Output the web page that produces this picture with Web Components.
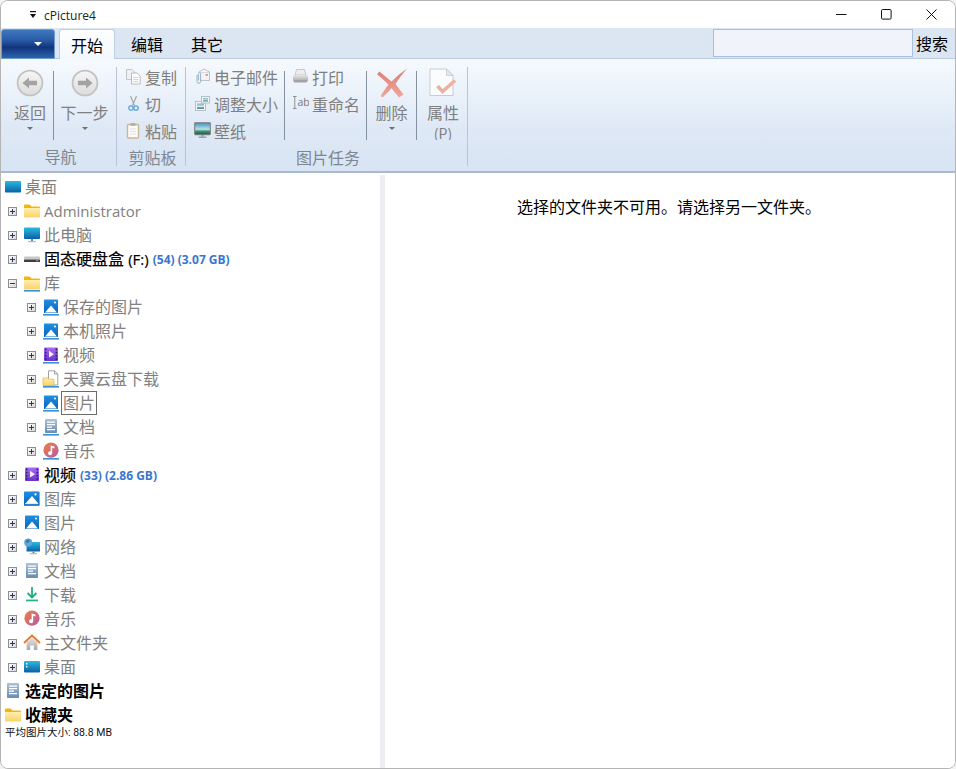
<!DOCTYPE html>
<html lang="zh"><head><meta charset="utf-8"><title>cPicture4</title>
<style>
html,body{margin:0;height:100%;background:#f3f3f3;overflow:hidden}
body{font:16px/22px "Open Sans","Noto Sans CJK SC",sans-serif;color:#000}
.lat{font-size:15px}
</style></head><body>
<x-app>
  <x-titlebar slot="title">cPicture4</x-titlebar>
  <x-tabbar slot="tabs"></x-tabbar>
  <x-ribbon slot="ribbon">
    <x-rgroup label="导航" style="width:109px;padding-left:6px;--lm:-2px">
      <x-large icon="back" arrow style="width:46px">返回</x-large>
      <x-sep></x-sep>
      <x-large icon="forward" arrow style="width:61px">下一步</x-large>
    </x-rgroup>
    <x-rgroup label="剪贴板" style="width:59px;padding-left:9px;--lm:-6px">
      <x-col>
        <x-small icon="copy">复制</x-small>
        <x-small icon="cut">切</x-small>
        <x-small icon="paste">粘贴</x-small>
      </x-col>
    </x-rgroup>
    <x-rgroup label="图片任务" style="width:272px;padding-left:9px;--lm:-6px">
      <x-col style="width:89px">
        <x-small icon="mail">电子邮件</x-small>
        <x-small icon="resize">调整大小</x-small>
        <x-small icon="wall">壁纸</x-small>
      </x-col>
      <x-sep></x-sep>
      <x-col style="width:73px;padding-left:8px">
        <x-small icon="print">打印</x-small>
        <x-small icon="rename">重命名</x-small>
      </x-col>
      <x-sep></x-sep>
      <x-large icon="delete" arrow style="width:49px">删除</x-large>
      <x-sep></x-sep>
      <x-large icon="props" style="width:50px;padding-left:2px">属性<span style="display:block;font-size:14px;line-height:16px;margin-top:2px">(P)</span></x-large>
    </x-rgroup>
  </x-ribbon>
  <x-tree slot="tree">
    <x-row level="0" icon="desk">桌面</x-row>
    <x-row level="1" icon="folder"><span class="lat">Administrator</span></x-row>
    <x-row level="1" icon="monitor">此电脑</x-row>
    <x-row level="1" icon="drive" strong count="(54) (3.07 GB)">固态硬盘盒 <span class="lat">(F:)</span></x-row>
    <x-row level="1" icon="folderlib" open>库</x-row>
    <x-row level="2" icon="pics">保存的图片</x-row>
    <x-row level="2" icon="pics">本机照片</x-row>
    <x-row level="2" icon="videolib">视频</x-row>
    <x-row level="2" icon="cloud">天翼云盘下载</x-row>
    <x-row level="2" icon="pics" focus>图片</x-row>
    <x-row level="2" icon="doclib">文档</x-row>
    <x-row level="2" icon="musiclib">音乐</x-row>
    <x-row level="1" icon="video" strong count="(33) (2.86 GB)">视频</x-row>
    <x-row level="1" icon="gallery">图库</x-row>
    <x-row level="1" icon="pic">图片</x-row>
    <x-row level="1" icon="net">网络</x-row>
    <x-row level="1" icon="doc">文档</x-row>
    <x-row level="1" icon="down">下载</x-row>
    <x-row level="1" icon="music">音乐</x-row>
    <x-row level="1" icon="home">主文件夹</x-row>
    <x-row level="1" icon="desk2">桌面</x-row>
    <x-row level="0" icon="doc" bold>选定的图片</x-row>
    <x-row level="0" icon="folder" bold>收藏夹</x-row>
    <x-status>平均图片大小: 88.8 MB</x-status>
  </x-tree>
  <x-message slot="content">选择的文件夹不可用。请选择另一文件夹。</x-message>
</x-app>
<script>
const DEFS=`<defs>
<linearGradient id="blue" x1="0" y1="0" x2="0" y2="1"><stop offset="0" stop-color="#2bbbdc"/><stop offset="1" stop-color="#0b5fa8"/></linearGradient>
<linearGradient id="pic" x1="0" y1="0" x2="0" y2="1"><stop offset="0" stop-color="#1f8fe3"/><stop offset="1" stop-color="#0a63b8"/></linearGradient>
<linearGradient id="yel" x1="0" y1="0" x2="0" y2="1"><stop offset="0" stop-color="#fdeeb2"/><stop offset="1" stop-color="#fbd365"/></linearGradient>
<linearGradient id="pur" x1="0" y1="0" x2="0" y2="1"><stop offset="0" stop-color="#a66cf0"/><stop offset="1" stop-color="#6a33c8"/></linearGradient>
<linearGradient id="doc" x1="0" y1="0" x2="0" y2="1"><stop offset="0" stop-color="#aac2da"/><stop offset="1" stop-color="#6b8bb0"/></linearGradient>
<linearGradient id="mus" x1="0" y1="0" x2="1" y2="1"><stop offset="0" stop-color="#ef8040"/><stop offset="1" stop-color="#b45aa8"/></linearGradient>
<linearGradient id="gry" x1="0" y1="0" x2="0" y2="1"><stop offset="0" stop-color="#e6e6e6"/><stop offset="1" stop-color="#a8a8a8"/></linearGradient>
<linearGradient id="land" x1="0" y1="0" x2="0" y2="1"><stop offset="0" stop-color="#3d8fc0"/><stop offset=".55" stop-color="#bfe0e6"/><stop offset=".7" stop-color="#3f9a6a"/><stop offset="1" stop-color="#14506a"/></linearGradient>
<linearGradient id="circ" x1="0" y1="0" x2="0" y2="1"><stop offset="0" stop-color="#f6f6f6"/><stop offset="1" stop-color="#dcdcdc"/></linearGradient>
<linearGradient id="red" x1="0" y1="0" x2="0" y2="1"><stop offset="0" stop-color="#e07a72"/><stop offset="1" stop-color="#eea79c"/></linearGradient>
</defs>`;
const UL='<rect x="1" y="16.2" width="16" height="1.3" fill="#0a78d4"/>';
const FOLDER='<path d="M1 5V3.5Q1 2.5 2 2.5H6.5L8.5 4.5H16Q17 4.5 17 5.5V6H1Z" fill="#f5b50d"/><path d="M1 6H17V14.5Q17 15.5 16 15.5H2Q1 15.5 1 14.5Z" fill="url(#yel)"/>';
const PIC='<rect x="2" y="1.5" width="14" height="13.5" rx=".6" fill="url(#pic)"/><path d="M3 14.6L9 7.4L15 14.6Z" fill="#fff"/><circle cx="13" cy="4.6" r="1" fill="#fff"/>';
const FILM='<rect x="2" y="1.5" width="14" height="13.5" rx="1" fill="url(#pur)"/><path d="M3 2.6h1.4v1.6H3zM3 5.8h1.4v1.6H3zM3 9h1.4v1.6H3zM3 12.2h1.4v1.6H3zM13.6 2.6H15v1.6h-1.4zM13.6 5.8H15v1.6h-1.4zM13.6 9H15v1.6h-1.4zM13.6 12.2H15v1.6h-1.4z" fill="#2c1670"/><path d="M7 4.8L12 8.2L7 11.6Z" fill="#f4eefe"/>';
const DOC='<rect x="3" y="1" width="12" height="15" rx=".8" fill="url(#doc)"/><path d="M5 3.5h8v1.2H5zM5 6h8v1.2H5zM5 8.5h5v1.2H5zM5 11h8v1.2H5z" fill="#fff"/>';
const NOTE='<circle cx="9" cy="8.2" r="7.6" fill="url(#mus)"/><path d="M8.6 3.4L12.4 4.6V6.4L10.2 5.7V11.2A2.1 1.9 0 1 1 8.6 9.4Z" fill="#fff"/>';
const ICONS={
desk:'<rect x="1" y="3" width="16" height="11.5" rx="1" fill="url(#blue)"/>',
desk2:'<rect x="1" y="3" width="16" height="11.5" rx="1" fill="url(#blue)"/><path d="M3 5h1.4v1.4H3zM3 8h1.4v1.4H3z" fill="#fff"/>',
folder:FOLDER,
folderlib:FOLDER+UL,
monitor:'<rect x="1" y="1.5" width="16" height="11.5" rx=".8" fill="url(#blue)"/><rect x="8" y="13" width="2" height="2.4" fill="#6f8796"/><rect x="5" y="15.2" width="8" height="1" fill="#9fb2be"/>',
drive:'<rect x="1" y="6.6" width="16" height="3" rx=".8" fill="#c8c8c8"/><rect x="1" y="9.4" width="16" height="2.6" rx=".6" fill="#3f3f3f"/><rect x="13" y="10.2" width="2.4" height="1" fill="#9a9a9a"/>',
pics:PIC+UL,pic:PIC,
videolib:FILM+UL,video:FILM,
doclib:DOC.replace('height="15"','height="14"')+UL,doc:DOC,
musiclib:NOTE+UL,music:NOTE,
cloud:'<path d="M6.5 .8H12.5L15.8 4V15H6.5Z" fill="#fff" stroke="#9a9a9a" stroke-width=".9"/><path d="M12.5 .8V4H15.8" fill="none" stroke="#9a9a9a" stroke-width=".9"/><path d="M1 8H5.5L7 9.2H12V15.5H1Z" fill="url(#yel)" stroke="#e6ac1c" stroke-width=".6"/>'+UL,
gallery:'<path d="M1 3.5 11 .8 16.6 2V15.6L1 15.8Z" fill="#bcd6ec"/><rect x="1" y="1.5" width="15.5" height="14.2" rx=".8" fill="url(#pic)"/><path d="M3 13 9 6 15 13Z" fill="#fff"/><rect x="2.2" y="13" width="13" height="1.2" fill="#dcecf8"/><circle cx="12.5" cy="4.4" r="1.1" fill="#fff"/>',
net:'<rect x="3.5" y="4" width="13.5" height="9.5" rx=".6" fill="url(#blue)"/><rect x="9.5" y="13.5" width="2" height="2" fill="#6f8796"/><rect x="7" y="15.2" width="7" height="1" fill="#9fb2be"/><circle cx="5.2" cy="4.4" r="4" fill="#5aa7d8"/><path d="M2.4 3.2Q4.6 1.2 6.6 1.6 7 3.6 5 5 3.2 5 2.4 3.2Z" fill="#3a7a9e"/>',
down:'<path d="M9 1v10" stroke="#1aae7c" stroke-width="1.8"/><path d="M4.6 7 9 11.4 13.4 7" fill="none" stroke="#1aae7c" stroke-width="1.8"/><rect x="3" y="13.6" width="12" height="1.7" fill="#1fb287"/>',
home:'<path d="M3.6 8.5 9 3.6 14.4 8.5V16H10.8V11.5H7.2V16H3.6Z" fill="url(#gry)"/><path d="M1 9 9 1.6 17 9" fill="none" stroke="#e8792a" stroke-width="1.9"/>',
back:'<circle cx="15" cy="15" r="12.4" fill="url(#circ)" stroke="#c2c2c2" stroke-width="1.8"/><path d="M7.5 15 14 9.6V12.8H22V17.2H14V20.4Z" fill="#a3a3a3"/>',
forward:'<circle cx="15" cy="15" r="12.4" fill="url(#circ)" stroke="#c2c2c2" stroke-width="1.8"/><path d="M22.5 15 16 9.6V12.8H8V17.2H16V20.4Z" fill="#a3a3a3"/>',
copy:'<path d="M1.5 1.5H7L9.5 4V11.5H1.5Z" fill="#eef0f3" stroke="#b5b9bf" stroke-width=".8"/><path d="M6.5 5H12L15.2 8V16H6.5Z" fill="#fbfbfb" stroke="#a9aeb5" stroke-width=".8"/><path d="M8.2 9.5h5M8.2 11.5h5M8.2 13.5h5" stroke="#c6ccd4" stroke-width=".8"/>',
cut:'<path d="M5.5 1 9.4 10.4M11.5 1 7.6 10.4" stroke="#a7a7a7" stroke-width="1.2"/><circle cx="6" cy="13" r="2.2" fill="none" stroke="#5fa3dd" stroke-width="1.3"/><circle cx="11" cy="13" r="2.2" fill="none" stroke="#5fa3dd" stroke-width="1.3"/>',
paste:'<rect x="2.5" y="2.5" width="11" height="13.5" rx="1" fill="#fbfbfb" stroke="#cbb795" stroke-width="1.4"/><rect x="5.5" y="1" width="5" height="3" rx=".6" fill="#b9b3a4"/><path d="M5 7h6M5 9.5h6M5 12h6" stroke="#e0dccf" stroke-width=".8"/>',
mail:'<path d="M5 4H15.5V12.5H6" fill="#f2f3f6" stroke="#aeb6c0" stroke-width=".8"/><path d="M5 4 10 1 15.5 4" fill="#f7f7f7" stroke="#aeb6c0" stroke-width=".8"/><rect x="11.5" y="6" width="2.4" height="1.8" fill="#e3907c"/><path d="M3 7V13.5A1.8 1.8 0 0 0 6.6 13.5V5.6A1.1 1.1 0 0 0 4.4 5.6V12.5" fill="none" stroke="#9ab0c6" stroke-width="1"/>',
resize:'<rect x="1.5" y="6.5" width="10" height="9" fill="#f4f6f8" stroke="#aab2bc" stroke-width=".8"/><rect x="3" y="8.5" width="7" height="5.5" fill="url(#land)" opacity=".7"/><rect x="7.5" y="1.5" width="8" height="6.5" fill="#f4f6f8" stroke="#aab2bc" stroke-width=".8"/><rect x="9" y="3" width="5" height="3.5" fill="url(#land)" opacity=".7"/>',
wall:'<rect x=".7" y=".7" width="15.6" height="12" rx=".6" fill="url(#land)" stroke="#7c7c7c" stroke-width="1.1"/><rect x="7" y="13" width="3" height="1.6" fill="#a3a3a3"/><rect x="4.5" y="14.6" width="8" height="1.2" fill="#8f8f8f"/>',
print:'<path d="M4.5 1.5H12.5L14 7H3Z" fill="#eceeef" stroke="#b5b5b5" stroke-width=".7"/><rect x="1" y="7" width="15" height="6.5" rx="1.6" fill="url(#gry)"/><rect x="1.8" y="12" width="13.4" height="2.6" rx="1" fill="#a3a3a3"/>',
rename:'<path d="M1 1.5H4.6M2.8 1.5V13.5M1 13.5H4.6" fill="none" stroke="#888" stroke-width=".9"/><text x="5.4" y="11" font-family="Open Sans" font-size="10.5" fill="#777">ab</text>',
delete:'<path d="M0 6.2 2.4 3.6Q10 10 14.5 13.5 21 7 30 .6 22.5 9.5 18.6 16 23 22 26.6 26.6L22 29.5Q18 24.5 14.5 20.2 10.5 25 6 29 4.6 29.6 3.8 27.6 7.8 21.4 11.4 16.4 6 11 0 6.2Z" fill="url(#red)"/>',
props:'<path d="M2 1H18.5L25 7.5V27.5H2Z" fill="#fbfcfd" stroke="#c5ccd3" stroke-width="1"/><path d="M18.5 1V7.5H25Z" fill="#e4e8ec" stroke="#c5ccd3" stroke-width=".8"/><path d="M9.5 18 14.5 23.5 27 12.5" fill="none" stroke="#ecb29f" stroke-width="3.4"/>'
};
function def(name,html){
  customElements.define(name,class extends HTMLElement{
    constructor(){super();this.attachShadow({mode:'open'})}
    connectedCallback(){this.shadowRoot.innerHTML=typeof html==='function'?html(this):html;}
  });
}
def('x-app',`<style>
:host{display:flex;flex-direction:column;box-sizing:border-box;width:956px;height:769px;border:1px solid #b4b4b4;border-radius:8px;overflow:hidden;background:#fff}
.main{flex:1;min-height:0;display:flex}
.split{width:5px;background:#eeeef2;flex:none}
</style><slot name="title"></slot><slot name="tabs"></slot><slot name="ribbon"></slot>
<div class="main"><slot name="tree"></slot><div class="split"></div><slot name="content"></slot></div>`);
def('x-titlebar',`<style>
:host{display:flex;align-items:center;height:27px;box-sizing:border-box;padding-right:1px;background:#fff;font:12px/16px "Open Sans",sans-serif;color:#222}
.glyph{margin:0 8px 0 29px;flex:none}
.t{flex:1;padding-top:2px}
.b{width:45px;display:flex;justify-content:center}
svg{display:block}
</style>
<svg class="glyph" width="6" height="8" viewBox="0 0 6 8"><rect y="0" width="6" height="1.2" fill="#111"/><path d="M0 3H6L3 7Z" fill="#111"/></svg>
<span class="t"><slot></slot></span>
<div class="b"><svg width="11" height="11" viewBox="0 0 11 11"><path d="M0 5.5H10.5" stroke="#111"/></svg></div>
<div class="b"><svg width="11" height="11" viewBox="0 0 11 11"><rect x=".5" y=".5" width="9.6" height="9.6" rx="1.2" fill="none" stroke="#111"/></svg></div>
<div class="b"><svg width="11" height="11" viewBox="0 0 11 11"><path d="M.5 .5 10.5 10.5M10.5 .5 .5 10.5" stroke="#111" fill="none"/></svg></div>`);
def('x-tabbar',`<style>
:host{display:flex;height:31px;background:#dce6f3;border-bottom:1px solid #b9cbe0;box-sizing:border-box;font:16px/22px "Noto Sans CJK SC",sans-serif;color:#000}
.menu{width:54px;height:30px;margin-top:1px;box-sizing:border-box;border-radius:3px 3px 0 0;border:1px solid #6f9bd0;background:linear-gradient(#3f78bd 0,#2a5ca8 35%,#12347c 62%,#2a66ad 100%);display:flex;align-items:center;justify-content:flex-end;padding:0 12px 0 0}
.menu i{width:0;height:0;border:4px solid transparent;border-top:4px solid #fff;border-bottom:0}
.tabs{display:flex;margin-left:4px;align-items:flex-end}
.tab{width:60px;height:29px;box-sizing:border-box;text-align:center;line-height:30px}
.on{width:56px;height:30px;background:linear-gradient(#fdfeff,#f3f8fe);border:1px solid #bccfe4;border-bottom:0;border-radius:3px 3px 0 0;margin-right:2px;margin-bottom:-1px}
.sp{flex:1}
.s{width:200px;height:28px;box-sizing:border-box;background:#f0f4fa;border:1px solid #a9bfdc;margin-top:1px}
.l{width:42px;box-sizing:border-box;padding-left:3px;line-height:30px}
</style><div class="menu"><i></i></div>
<div class="tabs"><div class="tab on">开始</div><div class="tab">编辑</div><div class="tab">其它</div></div>
<div class="sp"></div><div class="s"></div><div class="l">搜索</div>`);
def('x-ribbon',`<style>
:host{display:flex;height:116px;box-sizing:border-box;padding-top:8px;background:linear-gradient(#f6fafe 0,#dfe9f6 60%,#d8e4f3 100%) 0 0/100% 113px no-repeat,#fff;position:relative}
.line{position:absolute;left:0;right:0;top:112px;height:2px;background:#a9bace}
</style><slot></slot><div class="line"></div>`);
def('x-rgroup',el=>`<style>
:host{display:flex;flex-direction:column;height:99px;border-right:1px solid #b9c5d6;flex:none}
.c{display:flex;height:78px;margin-top:-4px;align-items:flex-start}
.l{margin-top:5px;font:16px/22px "Noto Sans CJK SC",sans-serif;color:#7d8793;text-align:center;margin-left:var(--lm,0)}
</style><div class="c"><slot></slot></div><div class="l">${el.getAttribute('label')}</div>`);
def('x-sep',`<style>:host{display:block;width:1px;height:69px;margin-top:8px;background:#84919f;flex:none}</style>`);
def('x-col',`<style>:host{display:flex;flex-direction:column;flex:none}</style><slot></slot>`);
def('x-icon',el=>{
  const n=el.getAttribute('name');const s=+el.getAttribute('size')||18;
  return `<style>:host{display:block;flex:none;width:${s}px;height:${s}px}svg{display:block}</style><svg width="${s}" height="${s}" viewBox="0 0 ${s} ${s}">${DEFS}${ICONS[n]}</svg>`;
});
def('x-small',el=>`<style>
:host{display:flex;align-items:center;height:27px;white-space:nowrap;font:16px/22px "Noto Sans CJK SC",sans-serif;color:#7f7f7f}
x-icon{margin:0 3px 0 -1px}
</style><x-icon name="${el.getAttribute('icon')}" size="17"></x-icon><slot></slot>`);
def('x-large',el=>`<style>
:host{display:block;flex:none;height:77px;overflow:hidden;text-align:center;font:16px/22px "Noto Sans CJK SC",sans-serif;color:#7f7f7f;padding-top:5px;box-sizing:border-box}
x-icon{margin:0 auto}
.t{margin-top:3px}
.a{width:0;height:0;margin:4px auto 0;border:3.5px solid transparent;border-top:3.5px solid #6f6f6f;border-bottom:0}
</style><x-icon name="${el.getAttribute('icon')}" size="30"></x-icon><div class="t"><slot></slot></div>${el.hasAttribute('arrow')?'<div class="a"></div>':''}`);
def('x-toggle',el=>`<style>:host{display:block;flex:none;width:9px;height:9px}svg{display:block}</style>
<svg width="9" height="9" viewBox="0 0 9 9"><defs><linearGradient id="t" x1="0" y1="0" x2="1" y2="1"><stop offset="0" stop-color="#fff"/><stop offset="1" stop-color="#d4d4d4"/></linearGradient></defs><rect x=".5" y=".5" width="8" height="8" fill="url(#t)" stroke="#8e8e8e"/><path d="M2 4.5H7${el.hasAttribute('open')?'':'M4.5 2V7'}" stroke="#23367a"/></svg>`);
def('x-tree',`<style>:host{display:flex;flex-direction:column;width:379px;flex:none;overflow:hidden;background:#fff}</style><slot></slot>`);
def('x-row',el=>{
  const lv=+el.getAttribute('level'),strong=el.hasAttribute('strong'),bold=el.hasAttribute('bold'),focus=el.hasAttribute('focus');
  const count=el.getAttribute('count');
  const pad=[3,7,26][lv];
  return `<style>
:host{display:flex;align-items:center;height:24px;white-space:nowrap;flex:none;padding-left:${pad}px;color:${strong||bold?'#000':'#808080'};font:${bold?'700':'400'} 16px/22px "Open Sans","Noto Sans CJK SC",sans-serif}
x-toggle{margin-right:6px}
.t{margin-left:${focus?1:3}px;${focus?'border:1px solid #6b6b6b;padding:0 1px;height:22px;':''}${strong?'-webkit-text-stroke:.2px #000;':''}}
.c{margin:2px 0 0 4px;font:700 12px/22px "Open Sans",sans-serif;color:#3a76cf}
</style>${lv?`<x-toggle ${el.hasAttribute('open')?'open':''}></x-toggle>`:''}<x-icon name="${el.getAttribute('icon')}"></x-icon><span class="t"><slot></slot></span>${count?`<span class="c">${count}</span>`:''}`;
});
def('x-status',`<style>:host{display:block;padding-left:4px;margin-top:-1px;font:10.5px/14px Roboto,"Noto Sans CJK SC",sans-serif;color:#111}</style><slot></slot>`);
def('x-message',`<style>:host{display:block;flex:1;text-align:center;background:#fff;padding:20px 2px 0 0;font:16px/22px "Noto Sans CJK SC",sans-serif;color:#000}</style><slot></slot>`);
</script>
</body></html>
